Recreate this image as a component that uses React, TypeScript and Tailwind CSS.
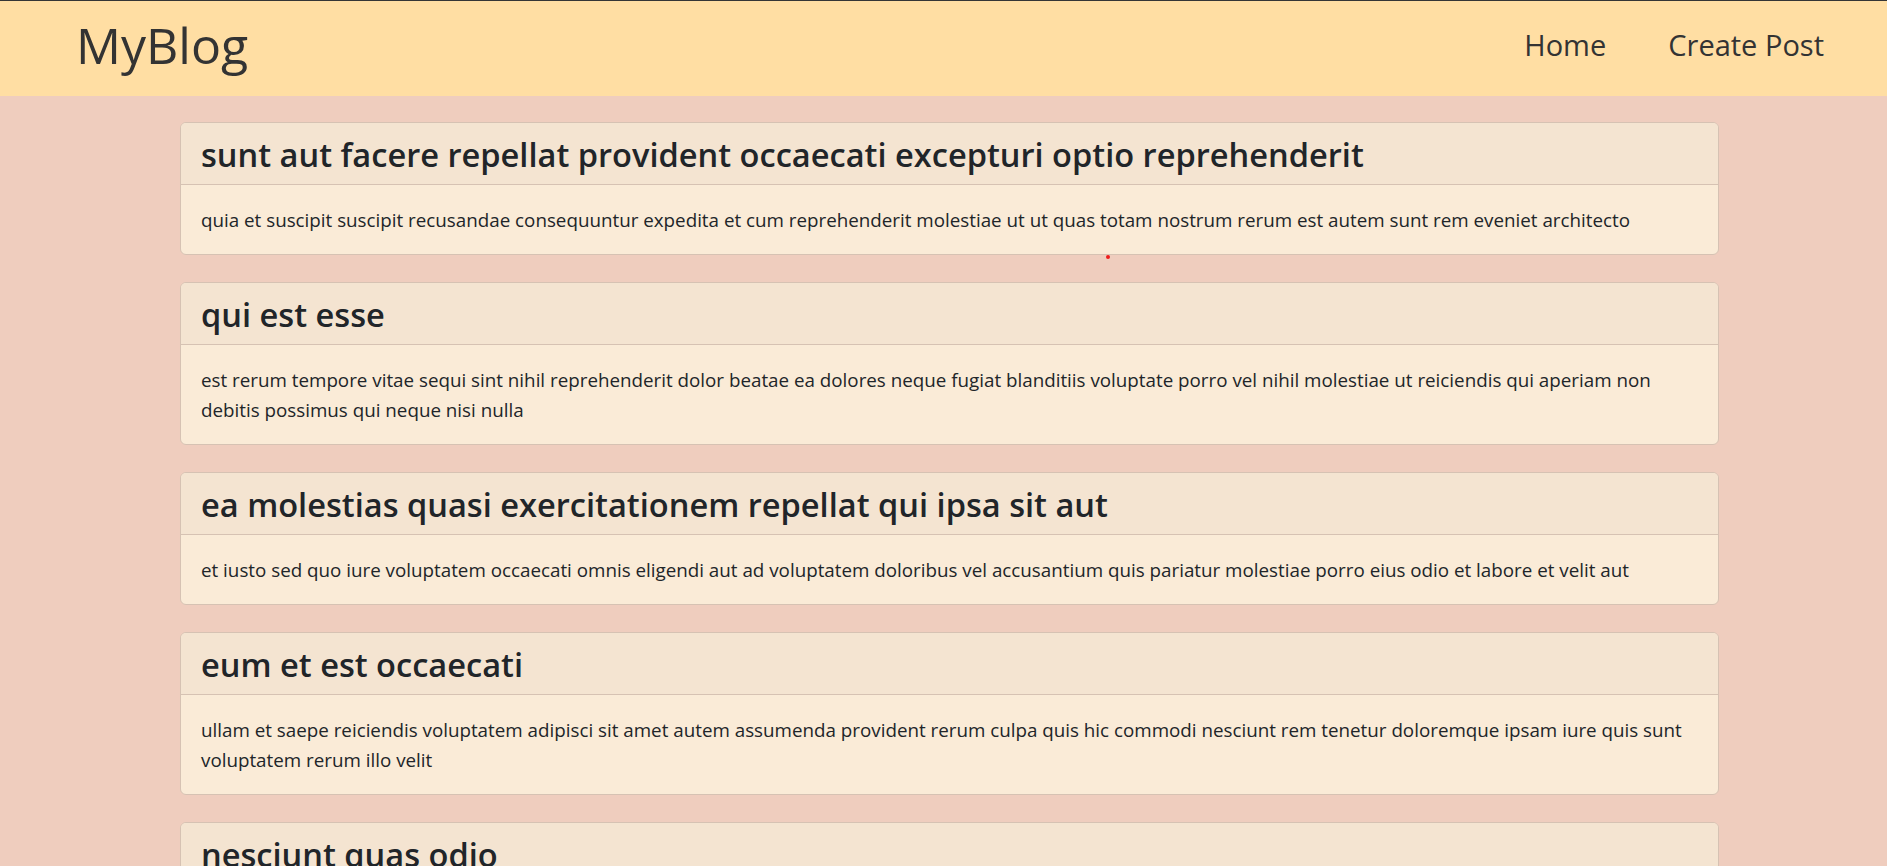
import React from "react";

const posts = [
  {
    title: "sunt aut facere repellat provident occaecati excepturi optio reprehenderit",
    body: "quia et suscipit suscipit recusandae consequuntur expedita et cum reprehenderit molestiae ut ut quas totam nostrum rerum est autem sunt rem eveniet architecto",
  },
  {
    title: "qui est esse",
    body: "est rerum tempore vitae sequi sint nihil reprehenderit dolor beatae ea dolores neque fugiat blanditiis voluptate porro vel nihil molestiae ut reiciendis qui aperiam non debitis possimus qui neque nisi nulla",
  },
  {
    title: "ea molestias quasi exercitationem repellat qui ipsa sit aut",
    body: "et iusto sed quo iure voluptatem occaecati omnis eligendi aut ad voluptatem doloribus vel accusantium quis pariatur molestiae porro eius odio et labore et velit aut",
  },
  {
    title: "eum et est occaecati",
    body: "ullam et saepe reiciendis voluptatem adipisci sit amet autem assumenda provident rerum culpa quis hic commodi nesciunt rem tenetur doloremque ipsam iure quis sunt voluptatem rerum illo velit",
  },
  {
    title: "nesciunt quas odio",
    body: "repudiandae veniam quaerat sunt sed alias aut fugiat sit autem sed est voluptatem omnis possimus esse voluptatibus quis est aut tenetur dolor neque",
  },
  {
    title: "dolorem eum magni eos aperiam quia",
    body: "ut aspernatur corporis harum nihil quis provident sequi mollitia nobis aliquid molestiae perspiciatis et ea nemo ab reprehenderit accusantium quas voluptate dolores velit et doloremque molestiae",
  },
];

export default function App() {
  return (
    <div
      className="relative min-h-screen bg-[#efcdbe] text-[#212529]"
      style={{ fontFamily: '"Open Sans", "Noto Sans", sans-serif' }}
    >
      <div className="h-px bg-[#353535]" />
      <nav className="flex h-[95px] items-center justify-between bg-[#ffdea3] pb-[8px] pl-[76px] pr-[63px] text-[#333333]">
        <a className="text-[50px] leading-none">MyBlog</a>
        <div className="flex items-center gap-[62px] text-[29px] leading-none">
          <a>Home</a>
          <a>Create Post</a>
        </div>
      </nav>
      <main className="ml-[180px] flex w-[1539px] flex-col gap-[27px] pt-[26px] pb-10">
        {posts.map((p, i) => (
          <div
            key={i}
            className="overflow-hidden rounded-md border border-[#d6c2b3] bg-[#faebd7]"
          >
            <div className="border-b border-[#d6c2b3] bg-[#f4e4d1] px-5 pt-[13px] pb-[10px]">
              <h2 className="text-[32.6px] font-semibold leading-[38px]">{p.title}</h2>
            </div>
            <div className="px-5 pt-5 pb-[19px] text-[18.8px] leading-[30px]">
              <p>{p.body}</p>
            </div>
          </div>
        ))}
      </main>
      <div className="absolute left-[1106px] top-[255px] h-[4px] w-[4px] rounded-full bg-[#ee1c1c]" />
    </div>
  );
}
